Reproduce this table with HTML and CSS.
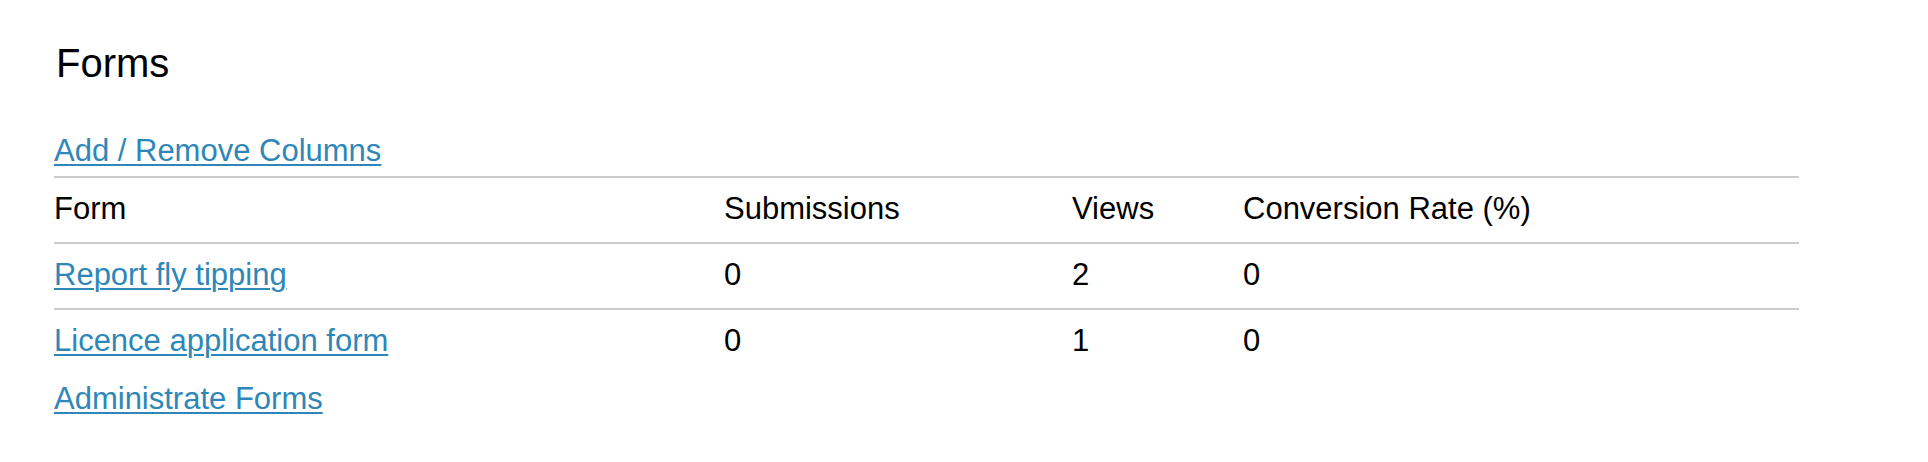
FILE: index.html
```html
<!DOCTYPE html>
<html lang="en">
<head>
<meta charset="utf-8">
<title>Forms</title>
<link rel="stylesheet" href="styles.css">
</head>
<body>
<div class="page">
  <h1 class="title">Forms</h1>
  <a class="link cols-link" href="#">Add / Remove Columns</a>
  <table class="forms-table">
    <colgroup>
      <col class="c-form">
      <col class="c-sub">
      <col class="c-views">
      <col class="c-rate">
    </colgroup>
    <thead>
      <tr>
        <th>Form</th>
        <th>Submissions</th>
        <th>Views</th>
        <th>Conversion Rate (%)</th>
      </tr>
    </thead>
    <tbody>
      <tr>
        <td><a class="link" href="#">Report fly tipping</a></td>
        <td>0</td>
        <td>2</td>
        <td>0</td>
      </tr>
      <tr>
        <td><a class="link" href="#">Licence application form</a></td>
        <td>0</td>
        <td>1</td>
        <td>0</td>
      </tr>
    </tbody>
  </table>
  <a class="link admin-link" href="#">Administrate Forms</a>
</div>
</body>
</html>
```
FILE: styles.css
```css
html, body {
  margin: 0;
  padding: 0;
  background: #fff;
}
body {
  font-family: "Liberation Sans", Arial, sans-serif;
  color: #111;
}
.page {
  padding: 40px 0 0 54px;
  display: flex;
  flex-direction: column;
  align-items: flex-start;
}
.title {
  margin: 0 0 0 2px;
  font-size: 40px;
  line-height: 46px;
  font-weight: normal;
  color: #000;
}
.link {
  color: #2e87b8;
  text-decoration: underline;
  text-decoration-thickness: 2px;
  text-underline-offset: 3px;
}
.cols-link {
  margin-top: 47px;
  font-size: 31px;
  line-height: 36px;
}
.forms-table {
  margin-top: 7px;
  width: 1745px;
  border-collapse: collapse;
  table-layout: fixed;
  font-size: 31px;
  line-height: 36px;
}
.c-form { width: 670px; }
.c-sub { width: 348px; }
.c-views { width: 171px; }
.c-rate { width: 556px; }
.forms-table tr {
  border-top: 2px solid #cbcbcb;
}
.forms-table th,
.forms-table td {
  padding: 13px 0 15px 0;
  text-align: left;
  font-weight: normal;
  color: #000;
  vertical-align: top;
}
.admin-link {
  margin-top: 7px;
  font-size: 31px;
  line-height: 36px;
}
```
